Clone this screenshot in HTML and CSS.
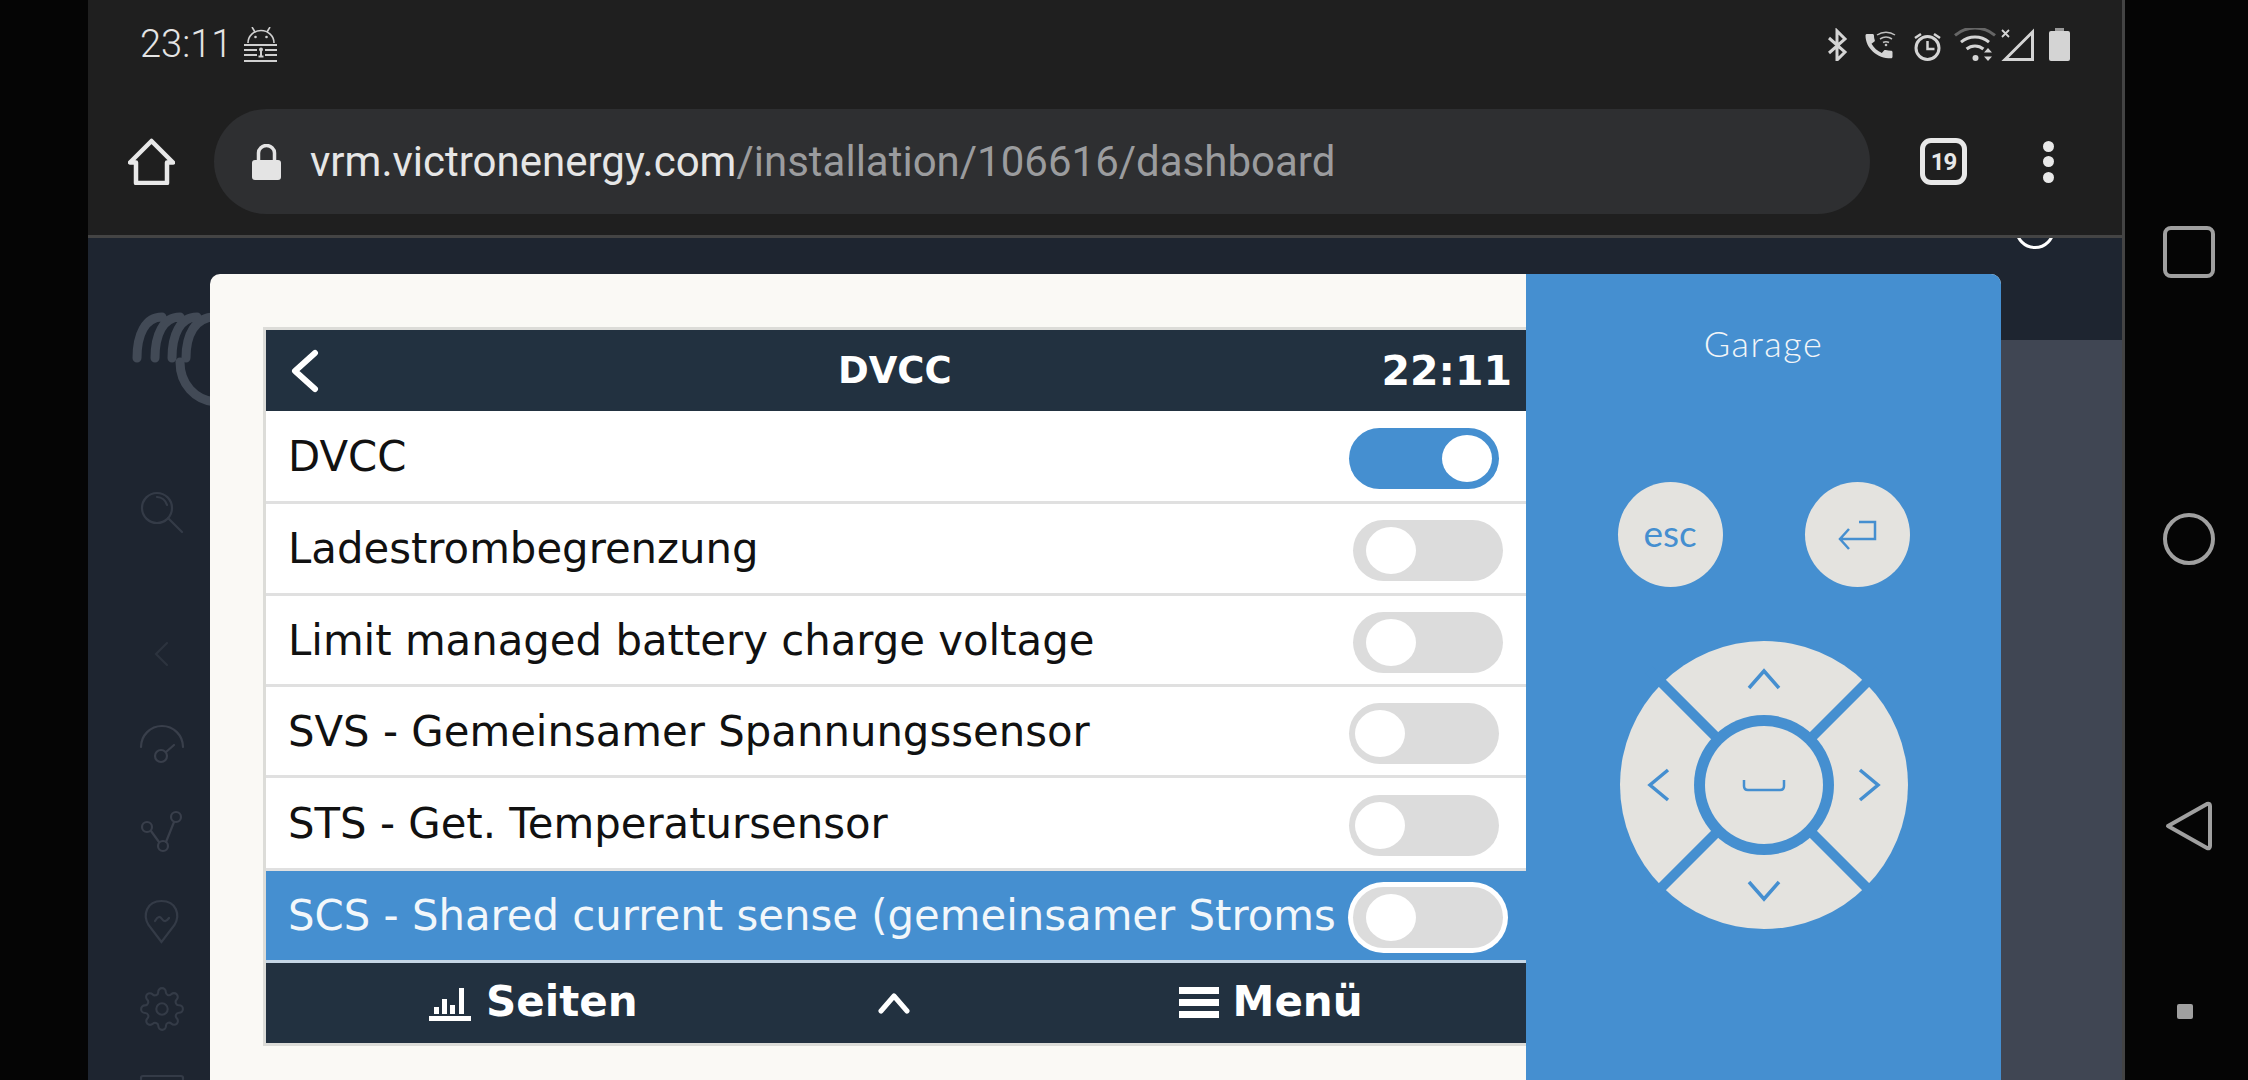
FILE: index.html
```html
<!DOCTYPE html>
<html lang="en">
<head>
    <meta charset="UTF-8">
    <title>VRM Remote Console</title>
    <link rel="stylesheet" href="styles.css">
</head>
<body>
    <div class="left-gap"></div>

    <div class="browser">
        <div class="status-bar">
            <span class="clock">23:11</span>
            <svg class="keepass-icon" viewBox="244 26 33 35" width="33" height="35">
                <g fill="none" stroke="#d0d0d0" stroke-width="1.6">
                    <path d="M248 42a13 12.500 0 0 1 26 0"/>
                    <path d="M252 26l3 5M270 26l-3 5"/>
                </g>
                <circle cx="255.500" cy="36" r="1.300" fill="#d0d0d0"/>
                <circle cx="266.500" cy="36" r="1.300" fill="#d0d0d0"/>
                <g stroke="#d0d0d0" stroke-width="2">
                    <path d="M244 44h33M244 49h13M265 49h12M244 54h13M265 54h12M244 60h33"/>
                    <path d="M261 47v9M258.500 55.500h5"/>
                </g>
                <circle cx="261" cy="48.500" r="2" fill="#d0d0d0"/>
            </svg>
            <svg class="status-icons" viewBox="1828 27 242 33" width="242" height="33">
                <path d="M1829 37l16 14-8 8V30l8 8-16 14" fill="none" stroke="#d4d4d4" stroke-width="3"/>
                <path transform="translate(1861 29) scale(1.5 1.35)" fill="#d4d4d4" d="M20.010 15.380c-1.230 0-2.420-.2-3.530-.56-.35-.12-.74-.03-1.010.24l-1.570 1.970c-2.830-1.350-5.480-3.900-6.890-6.830l1.950-1.660c.27-.28.35-.67.24-1.020-.37-1.110-.56-2.300-.56-3.530 0-.54-.45-.99-.99-.99H4.190C3.650 3 3 3.240 3 3.990 3 13.280 10.730 21 20.010 21c.71 0 .99-.63.99-1.180v-3.450c0-.54-.45-.99-.99-.99z"/>
                <g fill="none" stroke="#c0c0c0" stroke-width="1.500">
                    <path d="M1877 34a16 16 0 0 1 18 0M1880 38a11 11 0 0 1 12 0M1883 41.500a6 6 0 0 1 6 0"/>
                </g>
                <circle cx="1886" cy="44" r="1.300" fill="#c0c0c0"/>
                <g fill="none" stroke="#d4d4d4" stroke-width="3">
                    <circle cx="1927.500" cy="47" r="11.500"/>
                    <path d="M1915 37l6-4M1940 37l-6-4" stroke-width="2.500"/>
                    <path d="M1927.500 40v8h7" stroke-width="2.500"/>
                </g>
                <g fill="none" stroke-width="3">
                    <path d="M1955 34.300a31 31 0 0 1 40 0" stroke="#666"/>
                    <path d="M1961 41.100a22 22 0 0 1 28 0" stroke="#d4d4d4"/>
                    <path d="M1966.600 48a13 13 0 0 1 16.800 0" stroke="#d4d4d4"/>
                </g>
                <circle cx="1975.500" cy="57" r="3" fill="#d4d4d4"/>
                <path d="M1988 47l4 4.500h-8zM1988 60l4-4.500h-8z" fill="#d4d4d4"/>
                <path d="M2002 29l7 7M2009 29l-7 7" stroke="#d4d4d4" stroke-width="1.800"/>
                <path d="M2005 58.500l27.500-27.500v27.500z" fill="none" stroke="#d4d4d4" stroke-width="3"/>
                <rect x="2055" y="27" width="9" height="4" fill="#999"/>
                <rect x="2049" y="30" width="21" height="30" rx="2" fill="#d4d4d4"/>
            </svg>
        </div>

        <div class="toolbar">
            <svg class="home-icon" viewBox="128 138 47 47" width="47" height="47">
                <path d="M151.500 141L130 162.500h6V183h31v-20.500h6z" fill="none" stroke="#e8e8e8" stroke-width="4.500" stroke-linejoin="round"/>
            </svg>
            <div class="omnibox">
                <svg class="lock-icon" viewBox="252 143 29 36" width="29" height="36">
                    <path d="M258.500 161v-9a8 7.500 0 0 1 16 0v9" fill="none" stroke="#e4e4e4" stroke-width="3.500"/>
                    <rect x="252" y="159" width="29" height="20" rx="3" fill="#e4e4e4"/>
                </svg>
                <span class="url"><span class="url-host">vrm.victronenergy.com</span>/installation/106616/dashboard</span>
            </div>
            <div class="tab-count">19</div>
            <div class="menu-dots"><i></i><i></i><i></i></div>
        </div>

        <div class="page">
            <div class="sidebar">
                <svg viewBox="88 238 300 842" width="300" height="842">
                    <g fill="none" stroke="#424a56" stroke-width="9" stroke-linecap="round">
                        <path d="M137 358c0-23 8-41 25-41M155 358c0-23 8-41 25-41M172 358c0-23 8-41 25-41M186 358c0-23 9-41 29-41"/>
                        <path d="M180 362c0 22 15 38 35 40"/>
                    </g>
                    <g fill="none" stroke="#343b47" stroke-width="2.200" stroke-linecap="round">
                        <circle cx="157" cy="508" r="15"/>
                        <path d="M168 518l14 14M157 497a11 11 0 0 1 10 8"/>
                        <path d="M167 643l-11 11 11 11" stroke="#2c333e"/>
                        <g stroke="#393f4b">
                            <path d="M141 747a21 21 0 0 1 42 0"/>
                            <circle cx="161" cy="756" r="6"/>
                            <path d="M166 752l8-7"/>
                            <circle cx="147" cy="827" r="5"/>
                            <circle cx="176" cy="817" r="5"/>
                            <circle cx="163" cy="846" r="5"/>
                            <path d="M151 831l8 11M166 842l8-20"/>
                        </g>
                        <path d="M161.500 942l-13-17c-6-10-2-24 13-24s19 14 13 24z"/>
                        <path d="M155 921c3-5 5-5 7-2s4 3 7-1"/>
                        <g transform="translate(139.200 986.200) scale(1.900)" stroke-width="1.100">
                            <circle cx="12" cy="12" r="3"/>
                            <path d="M19.400 15a1.650 1.650 0 0 0 .33 1.820l.06.06a2 2 0 0 1 0 2.830 2 2 0 0 1-2.830 0l-.06-.06a1.650 1.650 0 0 0-1.820-.33 1.650 1.650 0 0 0-1 1.510V21a2 2 0 0 1-2 2 2 2 0 0 1-2-2v-.09A1.650 1.650 0 0 0 9 19.400a1.650 1.650 0 0 0-1.820.33l-.06.06a2 2 0 0 1-2.830 0 2 2 0 0 1 0-2.830l.06-.06a1.650 1.650 0 0 0 .33-1.820 1.650 1.650 0 0 0-1.510-1H3a2 2 0 0 1-2-2 2 2 0 0 1 2-2h.09A1.650 1.650 0 0 0 4.600 9a1.650 1.650 0 0 0-.33-1.820l-.06-.06a2 2 0 0 1 0-2.830 2 2 0 0 1 2.830 0l.06.06a1.650 1.650 0 0 0 1.820.33H9a1.650 1.650 0 0 0 1-1.510V3a2 2 0 0 1 2-2 2 2 0 0 1 2 2v.09a1.650 1.650 0 0 0 1 1.510 1.650 1.650 0 0 0 1.820-.33l.06-.06a2 2 0 0 1 2.830 0 2 2 0 0 1 0 2.830l-.06.06a1.650 1.650 0 0 0-.33 1.820V9a1.650 1.650 0 0 0 1.510 1H21a2 2 0 0 1 2 2 2 2 0 0 1-2 2h-.09a1.650 1.650 0 0 0-1.510 1z"/>
                        </g>
                        <path d="M141 1079v-1a2 2 0 0 1 2-2h38a2 2 0 0 1 2 2v1"/>
                    </g>
                </svg>
            </div>
            <div class="page-main">
                <div class="page-top"><span class="avatar"></span></div>
                <div class="page-content"></div>
            </div>

            <div class="modal">
                <div class="console-pane">
                    <div class="console">
                        <div class="console-header">
                            <svg class="back-icon" viewBox="0 0 30 44" width="30" height="44">
                                <path d="M26 4L6 22l20 18" fill="none" stroke="#fff" stroke-width="6" stroke-linecap="round" stroke-linejoin="round"/>
                            </svg>
                            <span class="console-title">DVCC</span>
                            <span class="console-time">22:11</span>
                        </div>
                        <div class="settings-list">
                            <div class="setting">
                                <span class="setting-label">DVCC</span>
                                <span class="toggle toggle-on"><i></i></span>
                            </div>
                            <div class="setting">
                                <span class="setting-label">Ladestrombegrenzung</span>
                                <span class="toggle toggle-inset"><i></i></span>
                            </div>
                            <div class="setting">
                                <span class="setting-label">Limit managed battery charge voltage</span>
                                <span class="toggle toggle-inset"><i></i></span>
                            </div>
                            <div class="setting">
                                <span class="setting-label">SVS - Gemeinsamer Spannungssensor</span>
                                <span class="toggle"><i></i></span>
                            </div>
                            <div class="setting">
                                <span class="setting-label">STS - Get. Temperatursensor</span>
                                <span class="toggle"><i></i></span>
                            </div>
                            <div class="setting setting-selected">
                                <span class="setting-label">SCS - Shared current sense (gemeinsamer Stroms</span>
                                <span class="toggle toggle-inset toggle-focus"><i></i></span>
                            </div>
                        </div>
                        <div class="console-footer">
                            <span class="footer-item footer-pages">
                                <svg viewBox="0 0 42 34" width="42" height="34">
                                    <path d="M0 28h42v5H0zM5 19h5v7H5zM13 11h5v15h-5zM21 17h5v9h-5zM30 0h5v26h-5z" fill="#fff"/>
                                </svg>
                                Seiten
                            </span>
                            <svg class="footer-up" viewBox="0 0 32 22" width="32" height="22">
                                <path d="M3 19L16 4l13 15" fill="none" stroke="#fff" stroke-width="5" stroke-linecap="round" stroke-linejoin="round"/>
                            </svg>
                            <span class="footer-item footer-menu">
                                <svg viewBox="0 0 40 32" width="40" height="32">
                                    <path d="M0 0h40v7H0zM0 12h40v7H0zM0 24h40v7H0z" fill="#fff"/>
                                </svg>
                                Menü
                            </span>
                        </div>
                    </div>
                </div>

                <div class="keypad">
                    <div class="keypad-title">Garage</div>
                    <div class="key-row">
                        <div class="round-key"><span class="esc-label">esc</span></div>
                        <div class="round-key">
                            <svg viewBox="0 0 40 30" width="40" height="30">
                                <path d="M22 2h16v17H3M12 9l-9 10 9 10" fill="none" stroke="#458fd0" stroke-width="2.500"/>
                            </svg>
                        </div>
                    </div>
                    <svg class="dpad" viewBox="0 0 290 290" width="290" height="290">
                        <circle cx="145" cy="145" r="144" fill="#e4e3df"/>
                        <path d="M30 30l230 230M260 30L30 260" stroke="#458fd0" stroke-width="10"/>
                        <circle cx="145" cy="145" r="70" fill="#458fd0"/>
                        <circle cx="145" cy="145" r="59" fill="#e4e3df"/>
                        <g fill="none" stroke="#458fd0" stroke-width="3.500">
                            <path d="M130 48l15-17 15 17"/>
                            <path d="M130 242l15 17 15-17"/>
                            <path d="M49 130l-18 15 18 15"/>
                            <path d="M241 130l18 15-18 15"/>
                            <path d="M125 140v6q0 4 4 4h32q4 0 4-4v-6" stroke-width="2.500"/>
                        </g>
                    </svg>
                </div>
            </div>
        </div>
    </div>

    <div class="nav-bar">
        <svg viewBox="0 0 52 52" width="52" height="52">
            <rect x="2" y="2" width="48" height="48" rx="6" fill="none" stroke="#a0a0a0" stroke-width="4"/>
        </svg>
        <svg viewBox="0 0 52 52" width="52" height="52">
            <circle cx="26" cy="26" r="24" fill="none" stroke="#a0a0a0" stroke-width="4"/>
        </svg>
        <svg viewBox="0 0 52 52" width="52" height="52">
            <path d="M5 26L44 4q3-1 3 2v40q0 3-3 2z" fill="none" stroke="#a0a0a0" stroke-width="4" stroke-linejoin="round"/>
        </svg>
        <div class="nav-small"></div>
    </div>
</body>
</html>
```

FILE: styles.css
```css
body {
    margin: 0;
    width: 2248px;
    height: 1080px;
    overflow: hidden;
    display: flex;
    background-color: #050505;
    font-family: "Roboto", sans-serif;
}
svg {
    display: block;
    flex: none;
}
.left-gap {
    width: 88px;
    flex: none;
}
.browser {
    width: 2034px;
    flex: none;
    display: flex;
    flex-direction: column;
    border-right: 3px solid #444;
    background-color: #1f1f1f;
}
.status-bar {
    height: 88px;
    flex: none;
    display: flex;
    align-items: center;
    padding: 0 52px;
}
.clock {
    font-size: 38px;
    font-weight: 300;
    color: #e4e4e4;
}
.keepass-icon {
    margin-left: 12px;
}
.status-icons {
    margin-left: auto;
}
.toolbar {
    height: 150px;
    flex: none;
    display: flex;
    align-items: center;
    padding-left: 40px;
    box-sizing: border-box;
    border-bottom: 3px solid #444;
}
.omnibox {
    width: 1656px;
    height: 105px;
    margin-left: 39px;
    display: flex;
    align-items: center;
    padding-left: 38px;
    box-sizing: border-box;
    border-radius: 53px;
    background-color: #2e2f31;
}
.url {
    margin-left: 29px;
    font-size: 42px;
    color: #9b9c9e;
    white-space: nowrap;
}
.url-host {
    color: #e6e6e6;
}
.tab-count {
    width: 47px;
    height: 47px;
    margin-left: 50px;
    box-sizing: border-box;
    border: 5px solid #e8e8e8;
    border-radius: 11px;
    display: flex;
    align-items: center;
    justify-content: center;
    font-size: 24px;
    font-weight: 700;
    letter-spacing: -1px;
    color: #e8e8e8;
}
.menu-dots {
    margin-left: 76px;
    display: flex;
    flex-direction: column;
    gap: 4.500px;
}
.menu-dots i {
    width: 11px;
    height: 11px;
    border-radius: 50%;
    background-color: #e8e8e8;
}
.page {
    flex: 1;
    position: relative;
    display: flex;
    overflow: hidden;
    background-color: #1e2530;
}
.sidebar {
    width: 300px;
    flex: none;
}
.page-main {
    flex: 1;
    display: flex;
    flex-direction: column;
}
.page-top {
    height: 102px;
    flex: none;
    position: relative;
}
.avatar {
    position: absolute;
    right: 67px;
    top: -29px;
    width: 40px;
    height: 40px;
    box-sizing: border-box;
    border: 3px solid #fff;
    border-radius: 50%;
}
.page-content {
    flex: 1;
    background-color: #404653;
}
.modal {
    position: absolute;
    left: 122px;
    top: 36px;
    width: 1791px;
    bottom: 0;
    display: flex;
    border-radius: 10px 10px 0 0;
    overflow: hidden;
    background-color: #faf9f5;
}
.console-pane {
    flex: 1;
    min-width: 0;
    padding: 53px 0 0 53px;
}
.console {
    height: 719px;
    box-sizing: border-box;
    border: 3px solid #dcdcd8;
    border-right: none;
    display: flex;
    flex-direction: column;
    font-family: "DejaVu Sans", sans-serif;
    background-color: #fff;
}
.console-header {
    height: 81px;
    flex: none;
    position: relative;
    display: flex;
    align-items: center;
    padding: 0 14px 0 23px;
    color: #fff;
    background-color: #223140;
}
.console-title {
    position: absolute;
    left: 572px;
    font-size: 37px;
    font-weight: 700;
}
.console-time {
    margin-left: auto;
    font-size: 41px;
    font-weight: 700;
}
.settings-list {
    display: grid;
    grid-template-rows: 93px 92px 91px 91px 93px 92px;
}
.setting {
    display: flex;
    align-items: center;
    padding: 0 27px 0 22px;
    min-width: 0;
    border-bottom: 3px solid #e0e0e0;
    font-size: 41.800px;
    color: #111;
}
.setting-label {
    flex: 1;
    min-width: 0;
    white-space: nowrap;
}
.setting-selected {
    color: #f2f7fb;
    background-color: #458fd0;
    border-bottom-color: #c5d6e6;
}
.toggle {
    width: 150px;
    height: 61px;
    flex: none;
    margin-top: 4px;
    display: flex;
    align-items: center;
    padding: 0 6px;
    box-sizing: border-box;
    border-radius: 31px;
    background-color: #dcdcdc;
}
.toggle i {
    width: 50px;
    height: 47px;
    border-radius: 50%;
    background-color: #fff;
}
.toggle-on {
    justify-content: flex-end;
    padding-right: 7px;
    background-color: #458fd0;
}
.toggle-inset {
    padding-left: 13px;
    margin-right: -4px;
}
.toggle-focus {
    box-shadow: 0 0 0 5px #fff;
}
.console-footer {
    flex: 1;
    display: flex;
    align-items: center;
    padding: 0 0 4px 163px;
    font-size: 42px;
    font-weight: 700;
    color: #fff;
    background-color: #223140;
}
.footer-item {
    display: flex;
    align-items: center;
    gap: 15px;
}
.footer-item svg {
    margin-top: 3px;
}
.footer-pages svg {
    margin-top: 7px;
}
.footer-up {
    margin: 3px 0 0 240px;
}
.footer-menu {
    margin-left: 269px;
    gap: 14px;
}
.keypad {
    width: 475px;
    flex: none;
    display: flex;
    flex-direction: column;
    align-items: center;
    background-color: #458fd0;
}
.keypad-title {
    margin-top: 47px;
    font-family: "Lato", sans-serif;
    font-size: 36px;
    font-weight: 300;
    letter-spacing: 1.500px;
    color: #f2f5f8;
}
.key-row {
    display: flex;
    gap: 82px;
    margin-top: 117px;
}
.round-key {
    width: 105px;
    height: 105px;
    border-radius: 50%;
    display: flex;
    align-items: center;
    justify-content: center;
    font-family: "Lato", sans-serif;
    font-size: 37px;
    color: #458fd0;
    background-color: #e4e3df;
}
.esc-label {
    padding-bottom: 4px;
}
.dpad {
    margin-top: 53px;
}
.nav-bar {
    flex: 1;
    display: flex;
    flex-direction: column;
    align-items: center;
    padding: 226px 0 0 4px;
}
.nav-bar svg + svg {
    margin-top: 235px;
}
.nav-small {
    width: 16px;
    height: 15px;
    margin: 152px 8px 0 0;
    border-radius: 2px;
    background-color: #a0a0a0;
}
```
